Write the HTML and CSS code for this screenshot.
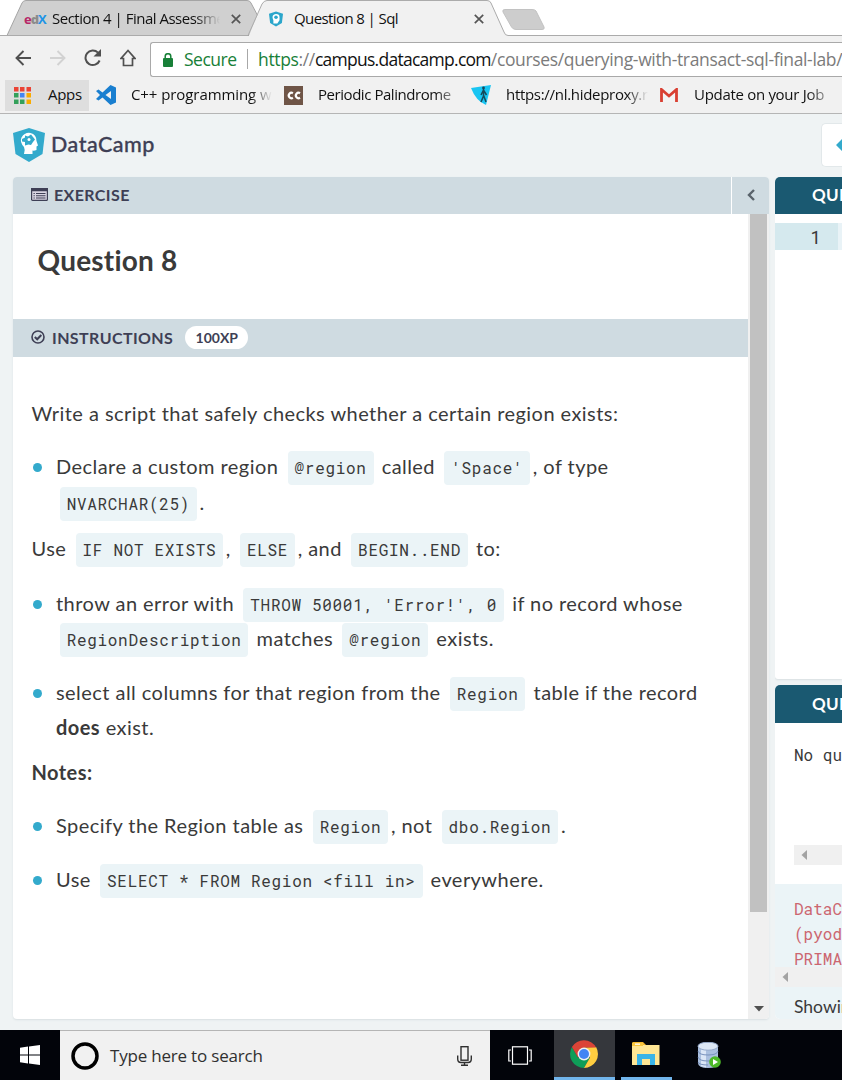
FILE: index.html
```html
<!DOCTYPE html>
<html lang="en">
<head>
<meta charset="utf-8">
<title>Question 8 | Sql</title>
<link rel="stylesheet" href="styles.css">
</head>
<body>
<header class="browser">
  <div class="tabs">
    <svg class="tab-shapes" width="842" height="37" viewBox="0 0 842 37">
      <path d="M7 35.5L22 3Q23 .5 26 .5H247Q250 .5 251 3L260 20L249 35.5Z" fill="#d0d0d0" stroke="#a5a5a5"/>
      <path d="M249 35.5L262 4Q264 .5 267 .5H487Q490 .5 491 3L504 32Q505 35.5 508 35.5V37H249Z" fill="#f1f1f1"/>
      <path d="M0 35.5H248L262 4Q264 .5 267 .5H487Q490 .5 491 3L504 32Q505 35.5 508 35.5H842" fill="none" stroke="#ababab"/>
      <path d="M505 9.5H532Q535 9.5 536 11L544 27Q545 29.5 542 29.5H516Q513 29.5 511.500 27L503 12Q502 9.500 505 9.500Z" fill="#cdcdcd" stroke="#c2c2c2"/>
    </svg>
    <div class="tab tab-one">
      <span class="edx"><i>e</i><b>d</b><em>X</em></span>
      <span class="tab-title fade">Section 4 | Final Assessme</span>
      <svg width="10" height="10" viewBox="0 0 10 10"><path d="M.8.8L9.200 9.200M9.200.8L.8 9.200" stroke="#555" stroke-width="1.700"/></svg>
    </div>
    <div class="tab tab-two">
      <svg width="14" height="16" viewBox="0 0 32 34"><path d="M16 0L32 5L29.500 26L16 34L2.500 26L0 5Z" fill="#2ba6cb"/><path d="M10 27V20Q6 12 10 8Q16 3 23 8Q25 12 24 20L19 27Z" fill="#fff"/><circle cx="16" cy="13" r="4" fill="#2ba6cb"/></svg>
      <span class="tab-title">Question 8 | Sql</span>
      <svg width="10" height="10" viewBox="0 0 10 10"><path d="M.8.8L9.200 9.200M9.200.8L.8 9.200" stroke="#555" stroke-width="1.700"/></svg>
    </div>
  </div>
  <div class="toolbar">
    <svg width="16" height="16" viewBox="0 0 16 16" fill="none" stroke="#505050" stroke-width="1.900"><path d="M16 8H1.500M8.500 1L1.500 8L8.500 15"/></svg>
    <svg width="16" height="16" viewBox="0 0 16 16" fill="none" stroke="#d2d2d2" stroke-width="1.900"><path d="M0 8H14.500M7.500 1L14.500 8L7.500 15"/></svg>
    <svg width="18" height="18" viewBox="0 0 18 18" fill="none" stroke="#505050" stroke-width="2"><path d="M15.600 11.500A7.300 7.300 0 1 1 14 3.600"/><path d="M17 0V7.500H9.500Z" fill="#505050" stroke="none"/></svg>
    <svg width="16" height="18" viewBox="0 0 16 18" fill="none" stroke="#505050" stroke-width="1.700"><path d="M8 1.500L1 9.500H3.500V16.500H12.500V9.500H15Z"/></svg>
    <div class="omnibox">
      <svg width="10" height="14" viewBox="0 0 10 14"><path d="M2.200 6V3.500A2.800 2.800 0 0 1 7.800 3.500V6" fill="none" stroke="#188038" stroke-width="1.500"/><rect y="5" width="10" height="9" rx="1" fill="#188038"/></svg>
      <span class="secure">Secure</span>
      <span class="divider"></span>
      <span class="url"><span class="scheme">https</span>://<span class="host">campus.datacamp.com</span>/courses/querying-with-transact-sql-final-lab/</span>
    </div>
  </div>
  <nav class="bookmarks">
    <span class="apps"><svg width="17" height="17" viewBox="0 0 17 17"><g fill="#ea4335"><path d="M0 0h4.500v4.500H0zM6 0h4.500v4.500H6zM12.500 0H17v4.500h-4.500z"/></g><path fill="#34a05a" d="M0 6h4.500v4.500H0zM0 12.500h4.500V17H0zM6 12.500h4.500V17H6z"/><path fill="#4285f4" d="M6 6h4.500v4.500H6z"/><path fill="#f9ab00" d="M12.500 6H17v4.500h-4.500zM12.500 12.500H17V17h-4.500z"/></svg><span class="label">Apps</span></span>
    <span class="mark mark-cpp"><svg width="20" height="20" viewBox="0 0 20 20"><path d="M14.500 0L20 2.500V17.500L14.500 20L6.500 12.500L2.500 15.500L0 14L4 10L0 6L2.500 4.500L6.500 7.500ZM15 6L9.500 10L15 14Z" fill="#1a7fd0"/></svg><span class="label fade">C++ programming w</span></span>
    <span class="mark mark-cc"><svg width="19" height="19" viewBox="0 0 19 19"><rect width="19" height="19" fill="#6f5547"/><path d="M8.900 7.200A2.700 2.700 0 1 0 8.900 11.800M16 7.200A2.700 2.700 0 1 0 16 11.800" fill="none" stroke="#fff" stroke-width="2.200"/></svg><span class="label fade">Periodic Palindrome</span></span>
    <span class="mark mark-proxy"><svg width="20" height="20" viewBox="0 0 20 20"><path d="M0 3L20 0L15 20Q5 16 0 3Z" fill="#19c5f2"/><path d="M12.500 4V11L10 17M12.500 10L15 17M10 10L12.500 5L15.500 10" fill="none" stroke="#16495b" stroke-width="1.500"/><circle cx="12.500" cy="3" r="1.400" fill="#16495b"/></svg><span class="label fade">https://nl.hideproxy.r</span></span>
    <span class="mark mark-mail"><svg width="18" height="14" viewBox="0 0 18 14"><path fill="#f3f3f3" d="M1 0h16v14H1z"/><path d="M1.500 14V1.500L9 8L16.500 1.500V14" fill="none" stroke="#d93f32" stroke-width="2.800"/></svg><span class="label fade">Update on your Job</span></span>
  </nav>
</header>
<main class="page">
  <div class="brand-row">
    <svg width="32" height="34" viewBox="0 0 32 34"><path d="M16 0L32 5L29.500 26L16 34L2.500 26L0 5Z" fill="#33aacc"/><path d="M11 26Q12.500 22 11 19Q6.500 14 8.500 9.500Q12 4 17.500 5Q23.500 6.500 23.500 13L25 17.500L23.500 18.500V22Q21 23 19.500 22.500V26Z" fill="#fff"/><path d="M12 17.500V14L9 13.500V11L12 9.500V7.500L15 8.500L18 6.500L20 9L22 11.500L20 14L18 17L15.500 16.500Z" fill="#33aacc"/><circle cx="16" cy="11.500" r="1.500" fill="#fff"/></svg>
    <span class="brand">DataCamp</span>
    <div class="nav-button"><svg width="14" height="14" viewBox="0 0 14 14"><path d="M0 7L7 0V4H14V10H7V14Z" fill="#33aacc"/></svg></div>
  </div>
  <div class="workspace">
    <section class="exercise">
      <div class="bar exercise-bar">
        <span class="bar-title"><svg width="17" height="13" viewBox="0 0 17 13"><rect x=".6" y=".6" width="15.800" height="11.800" rx="1" fill="#d9d5e2" stroke="#3e3f55" stroke-width="1.200"/><path d="M0 0H17V3.300H0ZM2.500 5h1.300v1H2.500zM2.500 7.300h1.300v1H2.500zM2.500 9.600h1.300v1H2.500zM5 5H14.500v1H5zM5 7.300H14.500v1H5zM5 9.600H14.500v1H5z" fill="#3e3f55"/></svg><span>EXERCISE</span></span>
        <span class="collapse"><svg width="8" height="12" viewBox="0 0 8 12"><path d="M7 1L2 6L7 11" fill="none" stroke="#59636b" stroke-width="2.400"/></svg></span>
      </div>
      <div class="exercise-body">
        <div class="content">
          <h1>Question 8</h1>
          <div class="bar instructions-bar">
            <svg width="14" height="14" viewBox="0 0 14 14" fill="none" stroke="#3e3f55"><circle cx="7" cy="7" r="6" stroke-width="1.600"/><path d="M3.800 7L6.200 9.300L10.300 5" stroke-width="2"/></svg>
            <span>INSTRUCTIONS</span><span class="xp">100XP</span>
          </div>
          <div class="instructions">
            <p>Write a script that safely checks whether a certain region exists:</p>
            <ul><li>Declare a custom region <code>@region</code> called <code>'Space'</code>, of type <code>NVARCHAR(25)</code>.</li></ul>
            <p>Use <code>IF NOT EXISTS</code>, <code>ELSE</code>, and <code>BEGIN..END</code> to:</p>
            <ul class="branches">
              <li>throw an error with <code>THROW 50001, 'Error!', 0</code> if no record whose <code>RegionDescription</code> matches <code>@region</code> exists.</li>
              <li>select all columns for that region from the <code>Region</code> table if the record <strong>does</strong> exist.</li>
            </ul>
            <p><strong>Notes:</strong></p>
            <ul>
              <li>Specify the Region table as <code>Region</code>, not <code>dbo.Region</code>.</li>
              <li>Use <code>SELECT * FROM Region &lt;fill in&gt;</code> everywhere.</li>
            </ul>
          </div>
        </div>
        <div class="scrollbar"><div class="thumb"></div><svg width="10" height="6" viewBox="0 0 10 6"><path d="M0 0H10L5 5.500Z" fill="#505050"/></svg></div>
      </div>
    </section>
    <div class="side">
      <section class="editor">
        <div class="dark-bar">QUERY</div>
        <div class="code-row"><span class="line-number">1</span></div>
      </section>
      <section class="result">
        <div class="dark-bar">QUERY</div>
        <div class="result-body">
          <pre>No query</pre>
          <div class="hscroll"><svg width="6" height="10" viewBox="0 0 6 10"><path d="M6 0V10L.5 5Z" fill="#a3a3a3"/></svg></div>
        </div>
        <div class="error">
          <pre>DataCamp
(pyodbc
PRIMARY</pre>
          <div class="hscroll"><svg width="6" height="10" viewBox="0 0 6 10"><path d="M6 0V10L.5 5Z" fill="#a3a3a3"/></svg></div>
          <div class="showing">Showing</div>
        </div>
      </section>
    </div>
  </div>
</main>
<footer class="taskbar">
  <div class="start"><svg width="20" height="20" viewBox="0 0 20 20"><path fill="#fff" d="M0 2.800L8 1.600V9.400H0ZM9 1.500L20 0V9.400H9ZM0 10.400H8V18.400L0 17.200ZM9 10.400H20V20L9 18.500Z"/></svg></div>
  <div class="search">
    <svg width="28" height="28" viewBox="0 0 28 28"><circle cx="14" cy="14" r="12" fill="none" stroke="#000" stroke-width="3.500"/></svg>
    <span>Type here to search</span>
    <svg width="15" height="20" viewBox="0 0 15 20" fill="none" stroke="#303030" stroke-width="1.400"><rect x="4" y=".7" width="7" height="13.500"/><path d="M.7 9.500V13Q.7 16.500 4 16.500H11Q14.300 16.500 14.300 13V9.500M7.500 16.500V19.300M4 19.300H11"/></svg>
  </div>
  <div class="task"><svg width="24" height="19" viewBox="0 0 24 19" fill="none" stroke="#fff" stroke-width="1.200"><rect x="4.500" y=".8" width="15" height="17.400"/><path d="M3 4H.8V15H3M21 4H23.200V15H21"/></svg></div>
  <div class="task active"><svg width="28" height="28" viewBox="0 0 28 28"><path d="M1.900 7A14 14 0 0 0 14 28L20 17.500L8 17.500Z" fill="#0f9d58"/><path d="M26.100 7A14 14 0 0 1 14 28L20 17.500L14 7.500Z" fill="#ffcd40"/><path d="M1.900 7A14 14 0 0 1 26.100 7.500H14L8 17.500Z" fill="#db4437"/><circle cx="14" cy="14" r="6.400" fill="#f1f1f1"/><circle cx="14" cy="14" r="5" fill="#4285f4"/></svg></div>
  <div class="task explorer"><svg width="28" height="24" viewBox="0 0 28 24"><path d="M.5 0H11L14 3H0Z" fill="#f5b82e"/><path d="M0 3H27.500V23H0Z" fill="#ffe694"/><path d="M0 1H11V4H0Z" fill="#fac83f"/><path d="M3 1.500h5v1.300H3z" fill="#fff"/><path d="M5 23V12H23V23H18V17H10V23Z" fill="#3ab4e8"/></svg></div>
  <div class="task database"><svg width="24" height="26" viewBox="0 0 24 26"><path d="M1 4V21Q1 26 11 26Q21 26 21 21V4Z" fill="#aabfdf"/><path d="M4 7V24L9 25.500V8Z" fill="#dbe6f6"/><path d="M1 9Q2 13 11 13T21 9M1 15Q2 19 11 19T21 15M1 20Q2 23 11 23" fill="none" stroke="#7992bd"/><ellipse cx="11" cy="4.200" rx="10" ry="4" fill="#dce7f5" stroke="#94a9ca"/><circle cx="18" cy="20" r="5.800" fill="#4db828"/><path d="M16 17L21 20L16 23Z" fill="#fff"/></svg></div>
</footer>
</body>
</html>
```

FILE: styles.css
```css
* { box-sizing: border-box; }
body { margin: 0; width: 842px; height: 1080px; overflow: hidden; display: flex; flex-direction: column; background: #eff3f4; font-family: Lato, sans-serif; color: #3a3a3a; }
svg { display: block; flex: none; }

.browser, .taskbar { font-family: "Open Sans", "Noto Sans", sans-serif; }
.browser { height: 114px; background: #f1f1f1; border-bottom: 1px solid #b5b5b5; color: #111; }
.tabs { position: relative; height: 36px; display: flex; background: #fff; }
.tab-shapes { position: absolute; left: 0; top: 0; }
.tab { position: relative; display: flex; align-items: center; height: 37px; font-size: 15px; letter-spacing: -.5px; white-space: nowrap; }
.tab-one { width: 241px; padding-left: 24px; }
.tab-two { width: 243px; padding-left: 28px; }
.edx { width: 28px; font-size: 13px; font-weight: 700; letter-spacing: -1px; line-height: 14px; }
.edx i { font-style: normal; color: #b72667; }
.edx b { color: #8c8c8c; }
.edx em { font-style: normal; color: #1e94e6; }
.tab-title { width: 168px; margin-right: 11px; padding-bottom: 1px; }
.tab-two .tab-title { width: 177px; margin: 0 11px; letter-spacing: -.6px; }
.fade { mask-image: linear-gradient(90deg, #000 85%, transparent 100%); }
.toolbar { height: 43px; display: flex; align-items: center; padding: 1px 0 0 15px; }
.toolbar > svg:nth-child(2) { margin-left: 19px; }
.toolbar > svg:nth-child(3) { margin-left: 18px; }
.toolbar > svg:nth-child(4) { margin-left: 18px; }
.omnibox { margin: 3px 0 0 14px; width: 692px; height: 35px; flex: none; display: flex; align-items: center; background: #fff; border: 1px solid #a9a9a9; border-right: 0; border-radius: 3px 0 0 3px; padding-left: 12px; font-size: 17.500px; line-height: 30px; white-space: nowrap; overflow: hidden; }
.omnibox > span { position: relative; top: -1px; }
.secure { width: 52px; flex: none; margin-left: 11px; color: #188038; letter-spacing: -.5px; }
.divider { width: 1px; flex: none; height: 20px; margin: 0 10px 0 11px; background: #a8a8a8; }
.url { color: #7b7b7b; letter-spacing: -.35px; }
.scheme { color: #188038; }
.host { color: #111; letter-spacing: -.73px; }
.bookmarks { height: 32px; display: flex; align-items: center; padding-left: 5px; font-size: 15px; letter-spacing: -.3px; white-space: nowrap; }
.label { line-height: 20px; padding-bottom: 2px; }
.apps { width: 84px; height: 31px; background: #dedede; display: flex; align-items: center; padding-left: 9px; gap: 17px; }
.mark { display: flex; align-items: center; flex: none; }
.mark .fade { flex: 1; }
.mark-cpp { width: 172px; margin-left: 7px; gap: 15px; letter-spacing: -.08px; }
.mark-cc { width: 172px; margin-left: 16px; gap: 15px; letter-spacing: -.45px; }
.mark-cc .fade { mask-image: linear-gradient(90deg, #000 85%, #0006 98%); }
.mark-proxy { width: 173px; margin-left: 15px; gap: 15px; }
.mark-mail { width: 168px; margin-left: 16px; gap: 16px; }
.mark-mail .fade { mask-image: linear-gradient(90deg, #000 85%, #0006 98%); }

.page { height: 916px; padding-left: 13px; overflow: hidden; }
.brand-row { height: 63px; display: flex; align-items: center; padding-bottom: 1px; }
.brand { margin-left: 6px; padding-bottom: 2px; font-family: "Lato Medium", Lato, sans-serif; font-size: 21.500px; font-weight: 500; color: #3e3f55; letter-spacing: .5px; flex: 1; -webkit-text-stroke: .3px; }
.nav-button { width: 21px; height: 44px; background: #fff; border: 1px solid #e2e8ea; border-right: 0; border-radius: 5px 0 0 5px; padding: 14px 0 0 14px; overflow: hidden; }
.workspace { display: grid; grid-template-columns: 756px 1fr; column-gap: 6px; height: 842px; }
.exercise { border-radius: 4px; overflow: hidden; background: #fff; box-shadow: 0 1px 2px #d8dfe2; display: flex; flex-direction: column; }
.bar { background: #cfdbe1; color: #3e3f55; font-size: 16px; font-weight: 700; letter-spacing: .4px; display: flex; align-items: center; }
.exercise-bar { height: 37px; }
.bar-title { width: 719px; display: flex; align-items: center; gap: 6px; padding: 0 0 2px 18px; height: 100%; border-right: 1px solid #fff; }
.collapse { flex: 1; display: flex; justify-content: center; padding-bottom: 1px; }
.exercise-body { flex: 1; display: flex; }
.content { width: 735px; }
h1 { margin: 0; height: 105px; padding: 25px 0 0 24.500px; font-size: 28px; line-height: 42px; font-weight: 700; letter-spacing: .2px; }
.instructions-bar { height: 38px; padding: 0 0 2px 18px; gap: 7px; }
.xp { width: 63px; height: 23px; margin-left: 5px; border-radius: 12px; background: #fff; font-size: 14px; line-height: 23px; text-align: center; letter-spacing: 0; }
.instructions { padding: 39px 20px 0 18.500px; font-size: 20px; line-height: 35.400px; letter-spacing: .45px; }
.instructions p { margin: 0; }
ul { margin: 18px 0 11px; padding: 0; list-style: none; }
.branches { margin: 19px 0 9px; }
li { position: relative; padding-left: 24.500px; }
li + li { margin-top: 18.500px; }
li::before { content: ""; position: absolute; left: 1px; top: 14px; width: 9px; height: 9px; border-radius: 50%; background: #33aacc; }
code { font-family: "Roboto Mono", "Liberation Mono", monospace; font-size: 16px; line-height: 1; letter-spacing: .68px; background: #ebf4f7; border-radius: 4px; padding: 6px 7px 7px; margin: 0 2.500px 0 3.700px; white-space: nowrap; }
.scrollbar { width: 21px; background: #f0f0f0; padding: 0 2px; display: flex; flex-direction: column; align-items: center; }
.thumb { width: 17px; height: 698px; background: #c1c1c1; margin-bottom: 94px; }

.side { display: flex; flex-direction: column; gap: 6px; overflow: hidden; }
.editor { height: 502px; background: #fff; border-radius: 5px 0 0 3px; overflow: hidden; box-shadow: 0 1px 2px #d8dfe2; }
.dark-bar { height: 37px; background: #1a5971; color: #fff; font-size: 17px; line-height: 36px; font-weight: 700; letter-spacing: .3px; padding-left: 37px; }
.code-row { margin-top: 9px; height: 27px; background: #e9f3f7; display: flex; }
.line-number { width: 63px; flex: none; background: #d5e9ee; padding-right: 17px; text-align: right; font: 18px/29px "Roboto Mono", "Noto Sans", sans-serif; }
.result { height: 334px; background: #fff; border-radius: 5px 0 0 5px; overflow: hidden; }
.result .dark-bar { height: 38px; line-height: 38px; }
pre { margin: 0; font-family: "Roboto Mono", "Liberation Mono", monospace; font-size: 16px; letter-spacing: 0; }
.result-body { height: 161px; padding: 19px 0 0 19px; }
.result-body pre { line-height: 26px; height: 103px; }
.hscroll { height: 20px; background: #f0f0f0; display: flex; align-items: center; padding-left: 7px; }
.error { height: 135px; background: #ebf4f7; padding-top: 12px; }
.error pre { color: #cc6670; line-height: 25px; height: 71px; padding-left: 19px; }
.showing { padding-left: 19px; font-size: 17.500px; line-height: 40px; }

.taskbar { height: 50px; background: #02040a; display: flex; }
.start { width: 60px; display: flex; align-items: center; justify-content: center; }
.search { width: 430px; background: #f1f1f1; border-top: 1px solid #b5b5b5; display: flex; align-items: center; padding-left: 11px; font-size: 17px; letter-spacing: -.2px; color: #303030; }
.search span { width: 347px; margin-left: 11px; }
.task { width: 64px; display: flex; align-items: center; justify-content: center; padding-right: 4px; }
.active { width: 61px; padding: 0 2px 0 0; background: #35373c; border-bottom: 3px solid #71b5ec; }
.explorer { width: 51px; margin-left: 6px; padding: 0 2px 0 0; border-bottom: 3px solid #71b5ec; }
.database { width: 76px; padding-right: 2px; }
```
